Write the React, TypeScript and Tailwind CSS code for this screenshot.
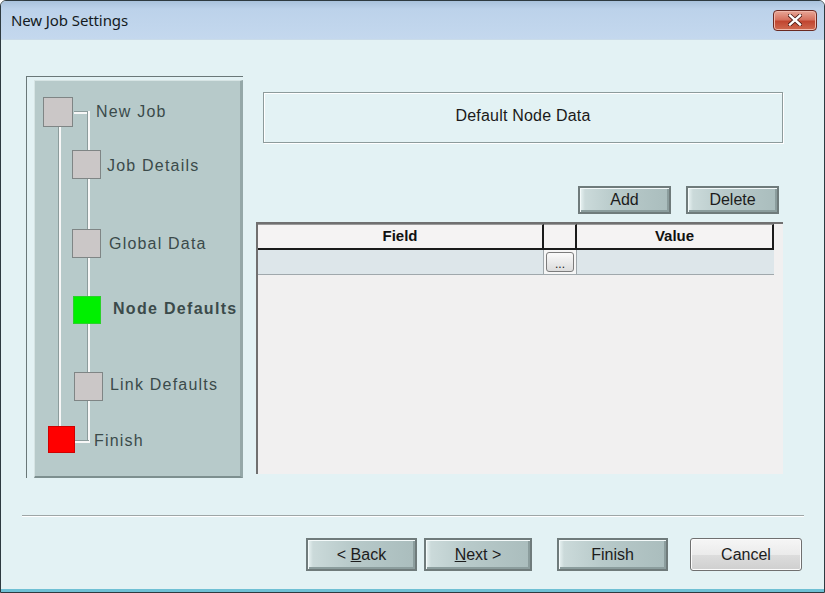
import React from "react";

const tealBtn =
  "flex items-center justify-center border-2 border-[#6f7b7b] bg-[linear-gradient(to_right,#eaf4f4_0px,#cbdada_5px,#b8caca_40%,#aabdbd_100%)] shadow-[inset_1px_1px_0_#f4fafa,inset_-2px_-2px_0_#8b9d9d] text-[#1c1c1c] font-['Liberation_Sans',Arial,sans-serif]";

function Node({ x, y, w, h, color, border }: { x: number; y: number; w: number; h: number; color: string; border: string }) {
  return (
    <div
      className="absolute"
      style={{ left: x, top: y, width: w, height: h, background: color, border: `1px solid ${border}` }}
    />
  );
}

function Label({ x, y, text, bold }: { x: number; y: number; text: string; bold?: boolean }) {
  return (
    <div
      className={`absolute leading-none text-[16px] text-[#3b4a4a] font-['Liberation_Sans',Arial,sans-serif] -translate-y-1/2 whitespace-nowrap ${bold ? "font-bold tracking-[1.3px]" : "tracking-[1.2px]"}`}
      style={{ left: x, top: y }}
    >
      {text}
    </div>
  );
}

function VLine({ x, y1, y2 }: { x: number; y1: number; y2: number }) {
  return (
    <div
      className="absolute w-[3px] bg-[#f7f7f7] border-l border-[#8c9c9c]"
      style={{ left: x, top: y1, height: y2 - y1 }}
    />
  );
}

function HLine({ y, x1, x2 }: { y: number; x1: number; x2: number }) {
  return (
    <div
      className="absolute h-[3px] bg-[#f7f7f7] border-t border-[#8c9c9c]"
      style={{ top: y, left: x1, width: x2 - x1 }}
    />
  );
}

export default function App() {
  return (
    <div className="w-[825px] h-[593px] flex flex-col bg-[#e3f2f4] border border-[#2e3a40] rounded-t-[6px] overflow-hidden font-['Liberation_Sans',Arial,sans-serif]">
      {/* Title bar */}
      <div className="h-[39px] shrink-0 flex items-center justify-between pl-[10px] pr-[7px] bg-[linear-gradient(to_bottom,#a9c2dc_0px,#bcd2ea_8px,#c4d8ee_100%)] border-b border-[#c9dbe9]">
        <span className="text-[15px] text-[#141a22] font-['Noto_Sans',sans-serif] tracking-[-0.1px]">New Job Settings</span>
        <div className="w-[44px] h-[21px] rounded-[4px] border border-[#6b2a22] bg-[linear-gradient(to_bottom,#e8a797_0%,#d6725f_45%,#c14631_55%,#cf6a50_100%)] shadow-[inset_0_0_0_1px_#f0b8ab] flex items-center justify-center">
          <svg width="14" height="12" viewBox="0 0 14 12">
            <path d="M2 1.5 L12 10.5 M12 1.5 L2 10.5" stroke="#4a1a14" strokeWidth="4" strokeLinecap="square" />
            <path d="M2 1.5 L12 10.5 M12 1.5 L2 10.5" stroke="#ffffff" strokeWidth="2.4" strokeLinecap="square" />
          </svg>
        </div>
      </div>

      {/* Body */}
      <div className="flex-1 flex flex-col border-b-[3px] border-[#6fc0d4]">
        <div className="flex pt-[36px] pl-[25px]">
          {/* Left panel frame */}
          <div className="w-[217px] h-[402px] flex border-l border-t border-[#6a7878] pl-[7px] pt-[3px]">
            <div className="relative flex-1 bg-[#b7caca] border-l border-t border-[#d6e4e4] border-r-[3px] border-r-[#95a8a8] border-b-2 border-b-[#7d8f8f]">
              <VLine x={23} y1={46} y2={346} />
              <HLine y={30} x1={39} x2={54} />
              <VLine x={52} y1={30} y2={362} />
              <HLine y={359} x1={40} x2={54} />
              <Node x={8} y={16} w={30} h={30} color="#cbc7c7" border="#7f8585" />
              <Node x={37} y={69} w={29} h={29} color="#cbc7c7" border="#7f8585" />
              <Node x={37} y={148} w={29} h={29} color="#cbc7c7" border="#7f8585" />
              <Node x={38} y={215} w={28} h={28} color="#00f000" border="#2bd12b" />
              <Node x={39} y={291} w={29} h={29} color="#cbc7c7" border="#7f8585" />
              <Node x={13} y={345} w={27} h={27} color="#ff0000" border="#d00000" />
              <Label x={61} y={31} text="New Job" />
              <Label x={72} y={85} text="Job Details" />
              <Label x={74} y={163} text="Global Data" />
              <Label x={78} y={228} text="Node Defaults" bold />
              <Label x={75} y={304} text="Link Defaults" />
              <Label x={59} y={360} text="Finish" />
            </div>
          </div>

          {/* Right column */}
          <div className="ml-[13px] w-[527px] flex flex-col">
            <div className="ml-[7px] mt-[16px] h-[51px] border border-[#8d9b9b] shadow-[inset_1px_1px_0_#ffffff,1px_1px_0_#ffffff] flex items-center justify-center pb-[4px]">
              <span className="text-[16px] text-[#1a1a1a] tracking-[0.2px]">Default Node Data</span>
            </div>
            <div className="mt-[43px] flex justify-end gap-[15px] pr-[4px]">
              <button className={`${tealBtn} w-[93px] h-[28px] text-[16px]`}>Add</button>
              <button className={`${tealBtn} w-[93px] h-[28px] text-[16px]`}>Delete</button>
            </div>
            <div className="mt-[8px] h-[252px] flex flex-col bg-[#f1f0f0] border-l-2 border-t-2 border-[#707070]">
              {/* Header */}
              <div className="flex h-[26px]">
                <div className="w-[286px] bg-[#f5f3f3] border-r-2 border-b-2 border-[#1a1a1a] border-t border-t-[#9a9a9a] flex items-center justify-center text-[15px] font-bold text-[#111]">Field</div>
                <div className="w-[33px] bg-[#f5f3f3] border-r-2 border-b-2 border-[#1a1a1a] border-t border-t-[#9a9a9a]" />
                <div className="w-[197px] bg-[#f5f3f3] border-r-2 border-b-2 border-[#1a1a1a] border-t border-t-[#9a9a9a] flex items-center justify-center text-[15px] font-bold text-[#111]">Value</div>
              </div>
              {/* Data row */}
              <div className="flex h-[25px]">
                <div className="w-[286px] bg-[#dde6ea] border-r border-b border-[#a0a8ac]" />
                <div className="w-[33px] bg-[#f6f6f6] border-r border-b border-[#a0a8ac] flex items-center justify-center">
                  <div className="w-[28px] h-[20px] rounded-[3px] border border-[#7c7c7c] bg-[linear-gradient(to_bottom,#fafafa,#dcdcdc)] flex items-end justify-center pb-[1px] text-[12px] leading-none text-[#222]">...</div>
                </div>
                <div className="w-[197px] bg-[#dde6ea] border-b border-[#a0a8ac]" />
              </div>
            </div>
          </div>
        </div>

        {/* Separator */}
        <div className="mt-[37px] ml-[21px] w-[782px] h-[2px] border-t border-[#9ea6a6] bg-white" />

        {/* Bottom buttons */}
        <div className="mt-[21px] flex justify-end pr-[22px]">
          <button className={`${tealBtn} w-[111px] h-[33px] text-[16px]`}>
            &lt;&nbsp;<span className="underline">B</span>ack
          </button>
          <button className={`${tealBtn} ml-[7px] w-[108px] h-[33px] text-[16px]`}>
            <span className="underline">N</span>ext &gt;
          </button>
          <button className={`${tealBtn} ml-[25px] w-[111px] h-[33px] text-[16px]`}>Finish</button>
          <button className="ml-[22px] w-[112px] h-[33px] rounded-[3px] border border-[#707070] bg-[linear-gradient(to_bottom,#f6f6f6_0%,#ebebeb_50%,#dddddd_51%,#cfcfcf_100%)] shadow-[inset_0_0_0_1px_#fcfcfc] text-[16px] text-[#1c1c1c] flex items-center justify-center">
            Cancel
          </button>
        </div>
      </div>
    </div>
  );
}
